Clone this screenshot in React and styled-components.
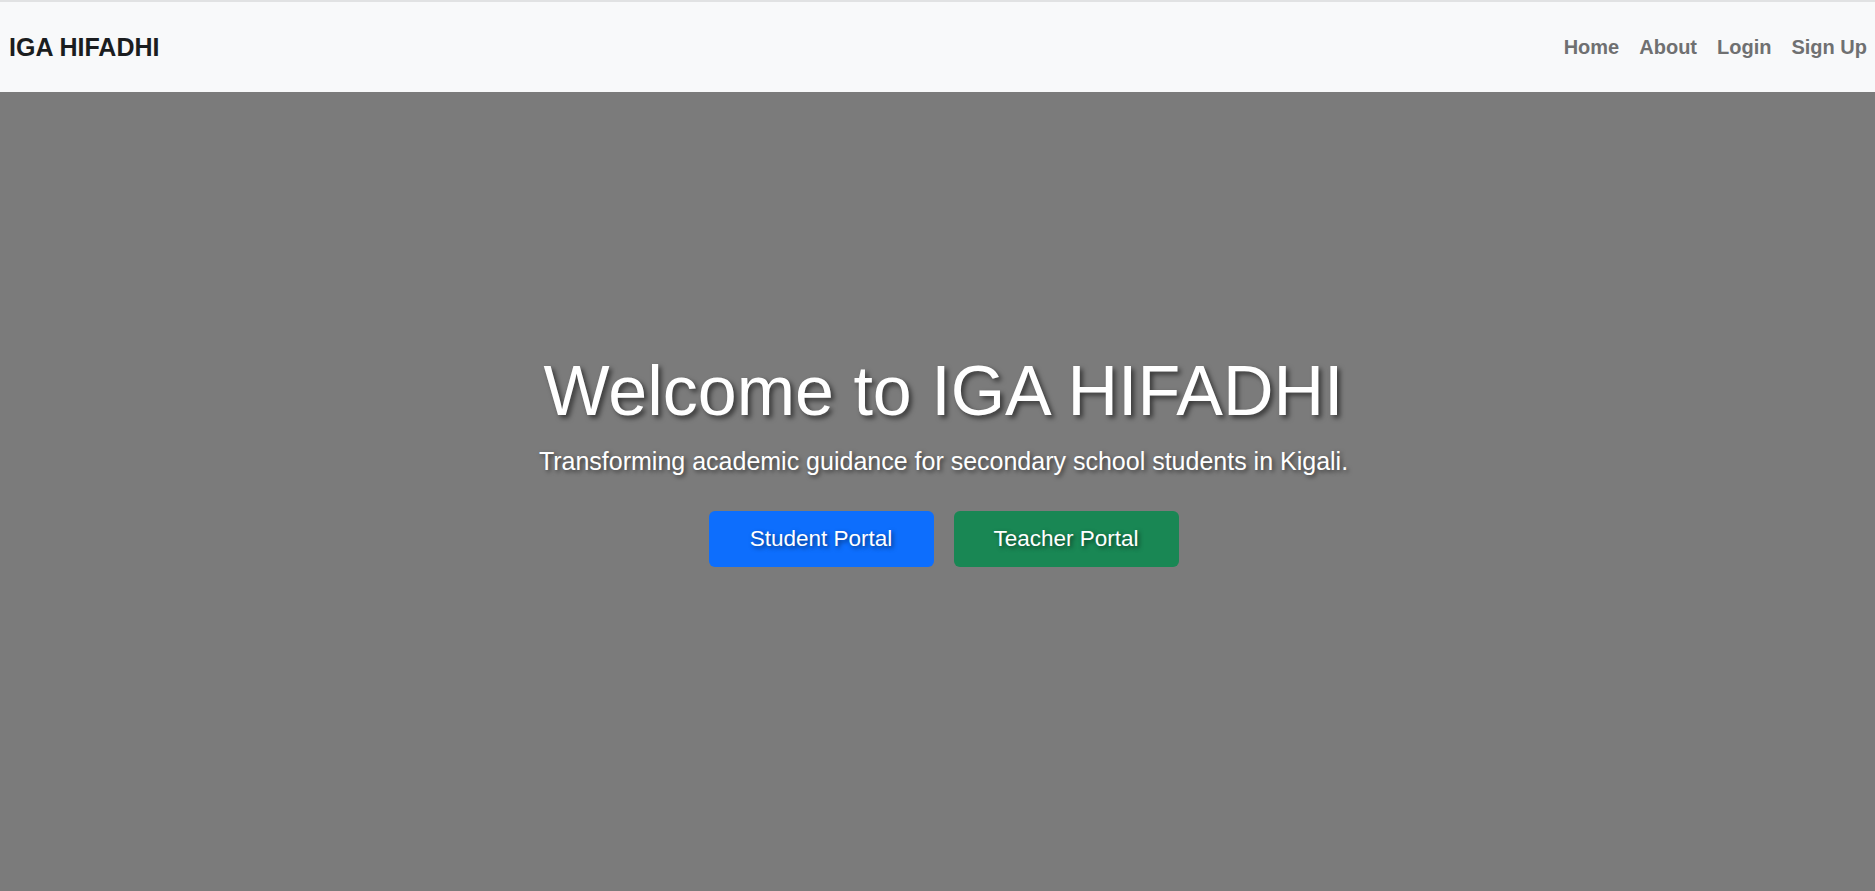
import React from 'react';
import styled, { createGlobalStyle } from 'styled-components';

const GlobalStyle = createGlobalStyle`
  html, body {
    margin: 0;
    padding: 0;
  }
  body {
    font-family: "Liberation Sans", Arial, sans-serif;
    background-color: #7b7b7b;
  }
  * {
    box-sizing: border-box;
  }
`;

const Page = styled.div`
  min-height: 100vh;
  display: flex;
  flex-direction: column;
`;

const Navbar = styled.nav`
  height: 92px;
  border-top: 2px solid #e1e2e3;
  background-color: #f8f9fa;
  display: flex;
  align-items: center;
  justify-content: space-between;
  padding: 0 8px 0 9px;
`;

const Brand = styled.a`
  font-size: 25px;
  font-weight: 700;
  line-height: 1.2;
  color: #1b1d1f;
  text-decoration: none;
`;

const NavList = styled.ul`
  list-style: none;
  margin: 0;
  padding: 0;
  display: flex;
  align-items: center;
`;

const NavLink = styled.a`
  display: block;
  padding: 0 10px;
  font-size: 20px;
  font-weight: 700;
  line-height: 1.5;
  color: #6f7071;
  text-decoration: none;

  li:last-child > & {
    padding-right: 0;
  }
`;

const Hero = styled.section`
  flex: 1;
  background-color: #7b7b7b;
  display: flex;
  flex-direction: column;
  align-items: center;
  padding: 257px 0 0 12px;
  color: #fff;
  text-align: center;
`;

const Title = styled.h1`
  margin: 0;
  font-size: 70px;
  font-weight: 400;
  line-height: 1.2;
  text-shadow: 3px 3px 5px rgba(0, 0, 0, 0.55);
`;

const Lead = styled.p`
  margin: 10px 0 0;
  font-size: 25px;
  line-height: 1.5;
  text-shadow: 2px 2px 4px rgba(0, 0, 0, 0.55);
`;

const ButtonRow = styled.div`
  display: flex;
  gap: 20px;
  margin-top: 30px;
`;

const PortalButton = styled.a`
  width: 225px;
  height: 56px;
  display: flex;
  align-items: center;
  justify-content: center;
  border-radius: 6px;
  background-color: ${({ variant }) => (variant === 'success' ? '#198754' : '#0d6efd')};
  color: #fff;
  font-size: 22.5px;
  line-height: 1.5;
  text-decoration: none;
  text-shadow: 2px 2px 4px rgba(0, 0, 0, 0.5);
`;

const links = ['Home', 'About', 'Login', 'Sign Up'];

const App = () => (
  <>
    <GlobalStyle />
    <Page>
      <Navbar>
        <Brand href="#">IGA HIFADHI</Brand>
        <NavList>
          {links.map((link) => (
            <li key={link}>
              <NavLink href="#">{link}</NavLink>
            </li>
          ))}
        </NavList>
      </Navbar>
      <Hero>
        <Title>Welcome to IGA HIFADHI</Title>
        <Lead>Transforming academic guidance for secondary school students in Kigali.</Lead>
        <ButtonRow>
          <PortalButton href="#">Student Portal</PortalButton>
          <PortalButton href="#" variant="success">Teacher Portal</PortalButton>
        </ButtonRow>
      </Hero>
    </Page>
  </>
);

export default App;
